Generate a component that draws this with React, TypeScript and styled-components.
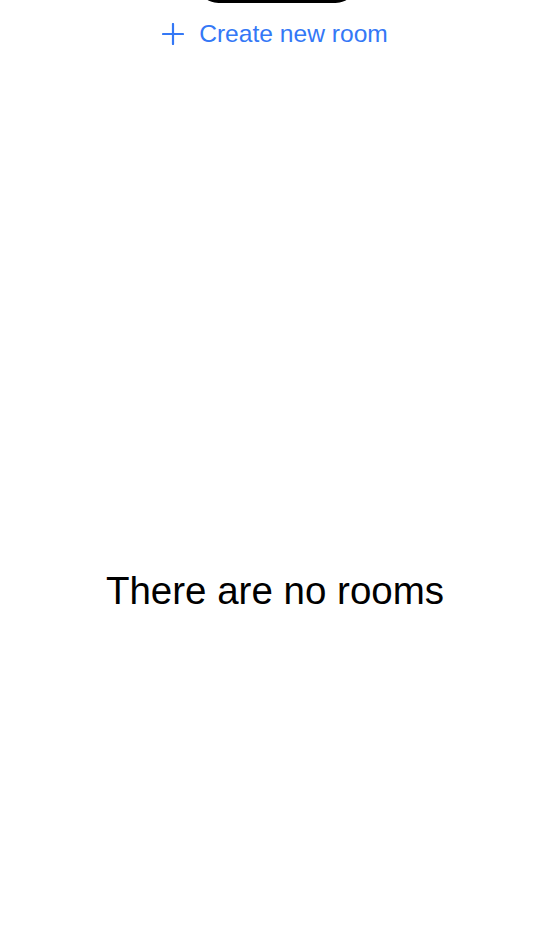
import React from "react";
import styled, { createGlobalStyle } from "styled-components";

const Global = createGlobalStyle`
  html, body { margin: 0; padding: 0; background: #fff; }
  body { font-family: "Liberation Sans", Arial, sans-serif; }
`;

const Screen = styled.div`
  position: relative;
  width: 550px;
  height: 932px;
  display: flex;
  flex-direction: column;
  align-items: center;
  overflow: hidden;
`;

const Island = styled.div`
  position: absolute;
  top: -40px;
  left: 197px;
  width: 160px;
  height: 43px;
  border-radius: 22px;
  background: #000;
`;

const CreateButton = styled.button`
  margin-top: 19px;
  display: flex;
  align-items: center;
  gap: 15px;
  border: none;
  background: none;
  padding: 0;
  color: #3478f6;
  font-family: "Liberation Sans", Arial, sans-serif;
  font-size: 24.6px;
  line-height: 30px;
  cursor: pointer;
`;

const Empty = styled.div`
  flex: 1;
  display: flex;
  justify-content: center;
  padding-top: 520px;
  font-size: 38.5px;
  color: #000;
`;

export default function App() {
  return (
    <Screen>
      <Global />
      <Island />
      <CreateButton>
        <svg width="22" height="22" viewBox="0 0 22 22" fill="none" stroke="#3478f6" strokeWidth="2.2" strokeLinecap="round">
          <path d="M11 1v20M1 11h20" />
        </svg>
        Create new room
      </CreateButton>
      <Empty>There are no rooms</Empty>
    </Screen>
  );
}
